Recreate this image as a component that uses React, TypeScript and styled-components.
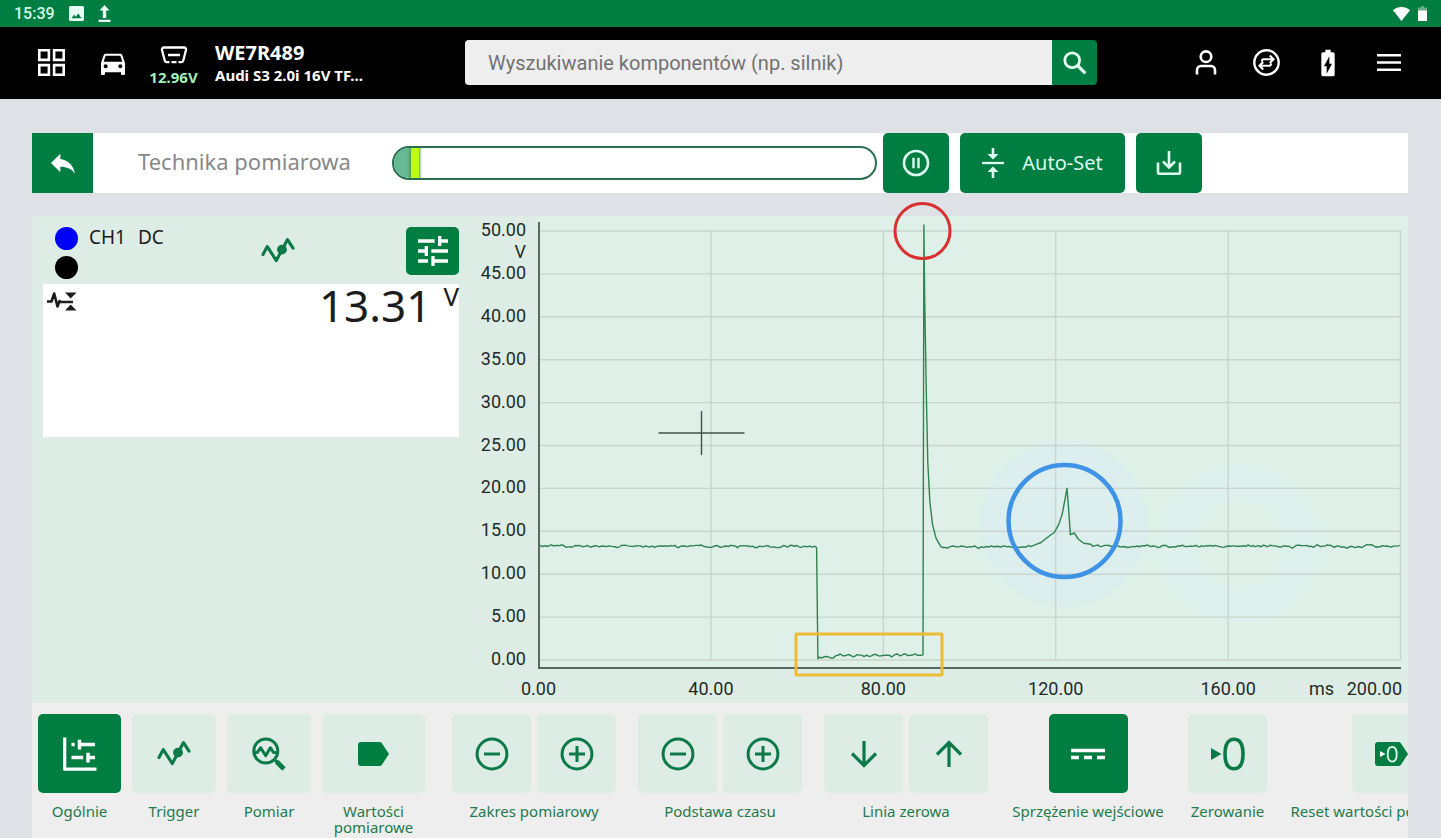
import React from 'react';
import styled, { createGlobalStyle, css } from 'styled-components';
import { MdBatteryChargingFull, MdDirectionsCar, MdReply, MdTune } from 'react-icons/md';

const colors = {
  green: '#007d40',
  iconGreen: '#0b7a48',
  mint: '#ddede5',
  page: '#dee1e6',
  grey: '#eeeeee',
};

const GlobalStyle = createGlobalStyle`
  *, *::before, *::after { box-sizing: border-box; }
  body {
    margin: 0;
    background: ${colors.page};
    font-family: 'Noto Sans', 'Open Sans', sans-serif;
    color: #1c1c1c;
    overflow-x: hidden;
  }
  button, input { font-family: inherit; }
  svg { display: block; }
`;

const Page = styled.div`
  display: flex;
  flex-direction: column;
  min-height: 100vh;
`;

const StatusBar = styled.div`
  display: flex;
  align-items: center;
  gap: 14px;
  height: 27px;
  padding: 0 14px;
  background: ${colors.green};
  color: #d6fbe8;
  font: 500 16px/27px Roboto, sans-serif;
`;

const StatusEnd = styled.div`
  display: flex;
  align-items: center;
  gap: 8px;
  margin-left: auto;
`;

const Header = styled.header`
  display: flex;
  align-items: center;
  height: 72px;
  padding: 0 22px 1px 21px;
  background: #000;
  color: #fff;
`;

const HeaderButton = styled.button`
  display: flex;
  flex-direction: column;
  align-items: center;
  justify-content: center;
  flex: 0 0 61px;
  height: 71px;
  padding: 0;
  border: 0;
  background: none;
  color: #fff;
`;

const BatteryButton = styled(HeaderButton)`
  gap: 3px;
  padding-top: 8px;
`;

const Voltage = styled.span`
  color: #a0f0b8;
  font-size: 15px;
  font-weight: 700;
  line-height: 20px;
`;

const Vehicle = styled.div`
  flex: 0 0 261px;
  padding-left: 11px;
  font-weight: 700;
`;

const Plate = styled.div`
  font-size: 20px;
  line-height: 24px;
`;

const Model = styled.div`
  font-size: 15px;
  line-height: 20px;
`;

const Search = styled.form`
  display: flex;
  flex: 1;
  min-width: 0;
  height: 45px;
  margin-right: 78px;
  border-radius: 4px;
  overflow: hidden;
`;

const SearchInput = styled.input`
  flex: 1;
  min-width: 0;
  padding: 0 23px;
  border: 0;
  background: ${colors.grey};
  font: 400 20px/24px Roboto, sans-serif;
  color: #333;
  outline: 0;
  &::placeholder { color: #727272; opacity: 1; }
`;

const SearchButton = styled.button`
  display: flex;
  align-items: center;
  justify-content: center;
  width: 45px;
  padding: 0;
  border: 0;
  background: ${colors.green};
  color: #e2fff0;
`;

const Main = styled.main`
  display: flex;
  flex: 1;
  flex-direction: column;
  padding: 34px 33px 0 32px;
`;

const Toolbar = styled.div`
  display: flex;
  align-items: center;
  height: 60px;
  margin-bottom: 23px;
  padding-right: 206px;
  background: #fff;
`;

const BackButton = styled.button`
  display: flex;
  align-items: center;
  justify-content: center;
  flex: 0 0 61px;
  height: 60px;
  padding: 0;
  border: 0;
  background: ${colors.green};
  color: #fff;
`;

const Title = styled.h1`
  flex: 0 0 299px;
  margin: 0;
  padding: 0 0 4px 45px;
  color: #888;
  font-size: 22px;
  font-weight: 400;
  line-height: 30px;
`;

const LevelTrack = styled.div`
  display: flex;
  flex: 1;
  min-width: 60px;
  height: 34px;
  margin-right: 6px;
  border: 2px solid #28704f;
  border-radius: 17px;
  background: #fff;
  overflow: hidden;
`;

const LevelFill = styled.div`
  width: 17px;
  background: #66b994;
`;

const LevelMarker = styled.div`
  width: 8px;
  background: #bcff14;
  box-shadow: 0 0 3px 1px #3d9a2c;
`;

const ActionButton = styled.button<{ $wide?: boolean }>`
  display: flex;
  align-items: center;
  justify-content: center;
  gap: 18px;
  flex: 0 0 ${(p) => (p.$wide ? 165 : 66)}px;
  height: 60px;
  padding: 0 0 1px;
  border: 0;
  border-radius: 5px;
  background: ${colors.green};
  color: #dcfff0;
  font-size: 20px;
  line-height: 28px;
  & + & { margin-left: 11px; }
`;

const Scope = styled.section`
  display: flex;
  background: ${colors.mint};
`;

const Channel = styled.div`
  flex: 0 0 438px;
  padding: 11px 11px 0;
`;

const ChannelHead = styled.div`
  display: flex;
  width: 416px;
  height: 57px;
  padding-left: 12px;
`;

const Dots = styled.div`
  display: flex;
  flex-direction: column;
  gap: 6px;
  width: 34px;
`;

const Dot = styled.span<{ $color: string }>`
  width: 23px;
  height: 23px;
  border-radius: 50%;
  background: ${(p) => p.$color};
`;

const ChannelName = styled.div`
  display: flex;
  gap: 12px;
  width: 172px;
  font-size: 19px;
  line-height: 20px;
`;

const ChannelTrigger = styled.div`
  padding-top: 10px;
  color: ${colors.iconGreen};
`;

const SettingsButton = styled.button`
  display: flex;
  align-items: center;
  justify-content: center;
  width: 53px;
  height: 48px;
  margin: 0 0 0 auto;
  padding: 0;
  border: 0;
  border-radius: 5px;
  background: ${colors.green};
  color: #fff;
`;

const Readout = styled.div`
  display: flex;
  align-items: flex-start;
  width: 416px;
  height: 153px;
  padding-left: 4px;
  background: #fff;
`;

const ReadoutIcon = styled.div`
  padding-top: 8px;
`;

const Value = styled.output`
  margin-left: auto;
  font-size: 44px;
  line-height: 42px;
`;

const Unit = styled.span`
  margin-left: 12px;
  font-size: 26px;
  line-height: 25px;
`;

const ChartBox = styled.div`
  flex: 1;
  min-width: 0;
`;

const ChartSvg = styled.svg`
  width: 100%;
  height: auto;
  overflow: visible;
  font: 400 18px Roboto, sans-serif;
`;

const Dock = styled.nav`
  display: flex;
  flex: 1;
  align-items: flex-start;
  padding: 11px 0 2px 6px;
  background: ${colors.grey};
  overflow: hidden;
`;

const Views = styled.div`
  display: flex;
  gap: 11px;
  margin-right: 27px;
`;

const Controls = styled.div`
  display: flex;
  gap: 22px;
`;

const Group = styled.div<{ $width: number }>`
  display: flex;
  flex-direction: column;
  align-items: center;
  flex: 0 0 ${(p) => p.$width}px;
`;

const Tiles = styled.div`
  display: flex;
  gap: 6px;
`;

const Tile = styled.button<{ $active?: boolean; $width?: number }>`
  display: flex;
  align-items: center;
  justify-content: center;
  width: ${(p) => p.$width ?? 79}px;
  height: 79px;
  padding: 0;
  border: 0;
  border-radius: 5px;
  background: ${colors.mint};
  color: ${colors.iconGreen};
  ${(p) =>
    p.$active &&
    css`
      background: ${colors.green};
      color: #fff;
    `}
`;

const Caption = styled.span<{ $wrap?: boolean }>`
  margin-top: 10px;
  color: #1f7a4c;
  font-size: 15px;
  line-height: 16px;
  text-align: center;
  white-space: ${(p) => (p.$wrap ? 'normal' : 'nowrap')};
`;

type IconProps = { w: number; h: number; children: React.ReactNode };

const Icon = ({ w, h, children }: IconProps) => (
  <svg
    width={w}
    height={h}
    viewBox={`0 0 ${w} ${h}`}
    fill="none"
    stroke="currentColor"
    strokeWidth="2.6"
    aria-hidden="true"
  >
    {children}
  </svg>
);

const ImageIcon = () => (
  <Icon w={15} h={15}>
    <path
      d="M1.5 0h12A1.5 1.5 0 0 1 15 1.5v12a1.5 1.5 0 0 1-1.5 1.5h-12A1.5 1.5 0 0 1 0 13.5v-12A1.5 1.5 0 0 1 1.5 0zM2.5 12.2h10L9.3 7.6l-2.6 3.2-1.7-2z"
      fill="#e6fff2"
      fillRule="evenodd"
      stroke="none"
    />
  </Icon>
);

const UploadIcon = () => (
  <Icon w={13} h={17}>
    <path d="M6.5 0 11.5 5.5H8.2V13H4.8V5.5H1.5zM.5 14.8h12V17H.5z" fill="#e6fff2" stroke="none" />
  </Icon>
);

const WifiIcon = () => (
  <Icon w={17} h={14}>
    <path d="M0 3.2C5-1 12-1 17 3.2L8.5 14z" fill="#fff" stroke="none" />
  </Icon>
);

const BatteryIcon = () => (
  <Icon w={9} h={15}>
    <path d="M3 0h3v1.5H9V5H0V1.5h3z" fill="#5fae85" stroke="none" />
    <path d="M0 4.5h9V15H0z" fill="#fff" stroke="none" />
  </Icon>
);

const GridIcon = () => (
  <Icon w={27} h={27}>
    <path d="M1.3 1.3h9.6v9.6H1.3zM16.1 1.3h9.6v9.6h-9.6zM1.3 16.1h9.6v9.6H1.3zM16.1 16.1h9.6v9.6h-9.6z" />
  </Icon>
);

const PlugIcon = () => (
  <Icon w={28} h={18}>
    <path
      d="M9.5 16.2H6.8a2 2 0 0 1-2-1.5L2 4a2 2 0 0 1 2-2.5h20A2 2 0 0 1 26 4l-2.8 10.7a2 2 0 0 1-2 1.5h-2.7M11.5 16.2h5M8 9h12"
      strokeWidth="2.3"
    />
  </Icon>
);

const SearchIcon = () => (
  <Icon w={24} h={24}>
    <circle cx="9.2" cy="9.2" r="7.4" strokeWidth="2.8" />
    <path d="M14.4 14.4l8 8" strokeWidth="3.2" />
  </Icon>
);

const PersonIcon = () => (
  <Icon w={22} h={25}>
    <circle cx="11" cy="6.7" r="5.3" />
    <path d="M2 24.5V20a4 4 0 0 1 4-4h10a4 4 0 0 1 4 4v4.5" />
  </Icon>
);

const SwapIcon = () => (
  <Icon w={27} h={27}>
    <circle cx="13.5" cy="13.5" r="12.2" strokeWidth="2.4" />
    <path
      d="M9 12.5v-.5a1.8 1.8 0 0 1 1.8-1.8H20M16.8 6.5l3.7 3.7-3.7 3.7M18 14.5v.5a1.8 1.8 0 0 1-1.8 1.8H7M10.2 13.1l-3.7 3.7 3.7 3.7"
      strokeWidth="2.1"
    />
  </Icon>
);

const MenuIcon = () => (
  <Icon w={24} h={17}>
    <path d="M0 1.3h24M0 8.5h24M0 15.7h24" strokeWidth="2.5" />
  </Icon>
);

const PauseIcon = () => (
  <Icon w={28} h={28}>
    <circle cx="14" cy="14" r="12" />
    <path d="M11.5 8.8v10.4M16.5 8.8v10.4" strokeWidth="2.4" />
  </Icon>
);

const AutoSetIcon = () => (
  <Icon w={22} h={30}>
    <path d="M0 15h22" strokeWidth="2.3" />
    <path
      d="M9.7 0h2.6v6H16.5L11 11.5 5.5 6h4.2zM9.7 30h2.6v-6H16.5L11 18.5 5.5 24h4.2z"
      fill="currentColor"
      stroke="none"
    />
  </Icon>
);

const DownloadIcon = () => (
  <Icon w={26} h={26}>
    <path d="M13 1v16M7 11.5l6 6 6-6M2 12.5v9.8a1.5 1.5 0 0 0 1.5 1.5h19a1.5 1.5 0 0 0 1.5-1.5v-9.8" />
  </Icon>
);

const TriggerIcon = () => (
  <Icon w={34} h={27}>
    <path d="M2 17.5 6.3 9.6l9 14L26.5 2.6l5.5 8.5" strokeWidth="3.1" strokeLinejoin="round" strokeLinecap="round" />
    <circle cx="21" cy="12.6" r="4.9" fill="currentColor" stroke="none" />
  </Icon>
);

const GeneralIcon = () => (
  <Icon w={34} h={34}>
    <path d="M1.7.5v31.7H33.5" strokeWidth="3.2" strokeLinejoin="round" />
    <path d="M8.5 7.5h3.2M17 7.5h15M16.5 2.7v9.8M8.5 20.5h11.7M25 20.5h7M25 15.7v9.8" strokeWidth="3.5" />
  </Icon>
);

const MeasureIcon = () => (
  <Icon w={34} h={34}>
    <circle cx="13.8" cy="14" r="12" strokeWidth="3" />
    <path d="M22 22l3 3" strokeWidth="3" />
    <path d="M24.5 24.5l7.5 7.5" strokeWidth="4.8" />
    <path d="M3 15.5h2.2l3.5-4.8 5 8 4.6-8 3.2 4.8h2.5" strokeWidth="3" strokeLinejoin="round" />
  </Icon>
);

const TagIcon = () => (
  <Icon w={31} h={24}>
    <path
      d="M3 0h18.5a3 3 0 0 1 2.4 1.2L31 12l-7.1 10.8a3 3 0 0 1-2.4 1.2H3a3 3 0 0 1-3-3V3a3 3 0 0 1 3-3z"
      fill="#007d40"
      stroke="none"
    />
  </Icon>
);

const MinusIcon = () => (
  <Icon w={34} h={34}>
    <circle cx="17" cy="17" r="14.9" strokeWidth="3" />
    <path d="M9 17h16" strokeWidth="3" />
  </Icon>
);

const PlusIcon = () => (
  <Icon w={34} h={34}>
    <circle cx="17" cy="17" r="14.9" strokeWidth="3" />
    <path d="M9 17h16M17 9v16" strokeWidth="3" />
  </Icon>
);

const ArrowIcon = ({ up }: { up?: boolean }) => (
  <Icon w={28} h={28}>
    <path d={up ? 'M14 27V3M2 14.5l12-12 12 12' : 'M14 1v24M2 13.5l12 12 12-12'} strokeWidth="3.2" />
  </Icon>
);

const DcIcon = () => (
  <Icon w={34} h={12}>
    <path d="M0 2.5h34M0 9.5h8M13 9.5h8M26 9.5h8" strokeWidth="3.6" />
  </Icon>
);

const ZeroIcon = () => (
  <Icon w={36} h={34}>
    <path d="M1 11l10.5 6L1 23z" fill="currentColor" stroke="none" />
    <path
      d="M24 2.2c6 0 9 5.4 9 14.8s-3 14.8-9 14.8-9-5.4-9-14.8 3-14.8 9-14.8z"
      strokeWidth="3.6"
    />
  </Icon>
);

const ZeroTagIcon = () => (
  <Icon w={33} h={24}>
    <path
      d="M3 0h20.5a3 3 0 0 1 2.4 1.2L33 12l-7.1 10.8a3 3 0 0 1-2.4 1.2H3a3 3 0 0 1-3-3V3a3 3 0 0 1 3-3z"
      fill="#007d40"
      stroke="none"
    />
    <path d="M5 9l5.5 3L5 15z" fill="#fff" stroke="none" />
    <path
      d="M17.2 4.8c3 0 4.5 2.7 4.5 7.4s-1.5 7.4-4.5 7.4-4.5-2.7-4.5-7.4 1.5-7.4 4.5-7.4z"
      stroke="#e2fff0"
      strokeWidth="1.8"
    />
  </Icon>
);

const SignalIcon = () => (
  <Icon w={30} h={19}>
    <path d="M0 9.5h4.5l2.7-8 3.3 13 2-5.5 1.3 1H26" strokeWidth="2.6" strokeLinejoin="round" />
    <path d="M18 .5h11.5L23.7 6.5zM18 18.5h11.5L23.7 12.5z" fill="currentColor" stroke="none" />
  </Icon>
);

const plot = { left: 69, right: 931, top: 15, bottom: 444, maxTime: 200, maxVolt: 50 };
const px = (ms: number) => plot.left + (ms / plot.maxTime) * (plot.right - plot.left);
const py = (v: number) => plot.bottom - (v / plot.maxVolt) * (plot.bottom - plot.top);

const random = (i: number) => {
  const s = Math.sin(i * 127.1 + 11.7) * 43758.5453;
  return (s - Math.floor(s)) * 2 - 1;
};
const noise = (i: number) => (random(i) + random(i + 1)) * 0.6 + random(Math.floor(i / 5)) * 0.4;

const flat = (from: number, to: number, volt: number, amp: number): [number, number][] => {
  const points: [number, number][] = [];
  for (let t = from, i = Math.round(from * 3); t <= to; t += 0.4, i += 1) points.push([t, volt + noise(i) * amp]);
  return points;
};

const samples: [number, number][] = [
  ...flat(0, 64.2, 13.25, 0.15),
  [64.4, 13.1],
  [64.6, 5],
  [64.7, 0.15],
  ...flat(65, 68.5, 0.32, 0.12),
  ...flat(69, 88.8, 0.55, 0.16),
  [89.1, 0.6],
  [89.3, 50.7],
  [89.5, 42],
  [89.9, 30],
  [90.2, 23],
  [90.7, 18.4],
  [91.3, 15.8],
  [92.1, 14.2],
  [92.8, 13.6],
  ...flat(93.3, 114.5, 13.2, 0.15),
  [115.5, 13.5],
  [116.5, 13.7],
  [118, 14.3],
  [119.6, 14.9],
  [120.6, 15.8],
  [121.4, 17],
  [122, 18.6],
  [122.5, 20],
  [122.9, 17.5],
  [123.3, 14.6],
  [124.2, 14.8],
  [125.1, 14.1],
  [126.4, 13.6],
  [128, 13.5],
  ...flat(128.5, 200, 13.25, 0.15),
];

const trace = samples.map(([t, v]) => `${px(t).toFixed(1)},${py(v).toFixed(1)}`).join(' ');
const volts = [50, 45, 40, 35, 30, 25, 20, 15, 10, 5, 0];
const times = [0, 40, 80, 120, 160];

const Chart = () => (
  <ChartSvg viewBox="0 0 938 487" role="img" aria-label="CH1 V / ms">
    <rect x="69" y="0" width="869" height="452" fill="#dff0e8" />
    <circle cx="594" cy="308" r="83" fill="#dceeed" />
    <circle cx="769" cy="328" r="62" fill="none" stroke="#def0eb" strokeWidth="34" />
    <g stroke="#c8d4cd" strokeWidth="1.4">
      {volts.map((v) => (
        <line key={v} x1={plot.left} x2={plot.right} y1={py(v)} y2={py(v)} />
      ))}
      {[...times.slice(1), 200].map((t) => (
        <line key={t} x1={px(t) - 0.5} x2={px(t) - 0.5} y1={plot.top} y2={plot.bottom} />
      ))}
    </g>
    <path d="M69 6v446" stroke="#5b6862" strokeWidth="2" />
    <path d="M68 452h863" stroke="#5b6862" strokeWidth="2" />
    <g fill="#232b28">
      <g textAnchor="end">
        {volts.map((v) => (
          <text key={v} x="56" y={py(v) + 5}>
            {v.toFixed(2)}
          </text>
        ))}
        <text x="56" y="42">V</text>
        <text x="932" y="479">200.00</text>
        <text x="864" y="479">ms</text>
      </g>
      <g textAnchor="middle">
        {times.map((t) => (
          <text key={t} x={px(t) - 0.5} y="479">
            {t.toFixed(2)}
          </text>
        ))}
      </g>
    </g>
    <path d="M188.5 217h86M231.5 195v44" stroke="#46504c" strokeWidth="1.4" />
    <polyline points={trace} fill="none" stroke="#2f8350" strokeWidth="1.4" strokeLinejoin="round" />
    <circle cx="452.5" cy="15" r="27.5" fill="none" stroke="#d9302f" strokeWidth="3" />
    <circle cx="594.5" cy="305" r="56" fill="none" stroke="#3f93e6" strokeWidth="4.5" />
    <rect x="326" y="418" width="146" height="41" rx="1" fill="none" stroke="#edbc34" strokeWidth="3" />
  </ChartSvg>
);

const views = [
  { label: 'Ogólnie', icon: <GeneralIcon />, width: 83, active: true },
  { label: 'Trigger', icon: <TriggerIcon />, width: 84 },
  { label: 'Pomiar', icon: <MeasureIcon />, width: 84 },
  { label: 'Wartości pomiarowe', icon: <TagIcon />, width: 103, wrap: true },
];

const controls = [
  { label: 'Zakres pomiarowy', width: 164, tiles: [{ name: 'Zakres −', icon: <MinusIcon /> }, { name: 'Zakres +', icon: <PlusIcon /> }] },
  { label: 'Podstawa czasu', width: 164, tiles: [{ name: 'Czas −', icon: <MinusIcon /> }, { name: 'Czas +', icon: <PlusIcon /> }] },
  { label: 'Linia zerowa', width: 164, tiles: [{ name: 'W dół', icon: <ArrowIcon /> }, { name: 'W górę', icon: <ArrowIcon up /> }] },
  { label: 'Sprzężenie wejściowe', width: 156, tiles: [{ name: 'Sprzężenie wejściowe', icon: <DcIcon />, active: true }] },
  { label: 'Zerowanie', width: 79, tiles: [{ name: 'Zerowanie', icon: <ZeroIcon /> }] },
  { label: 'Reset wartości pomiarowych', width: 204, tiles: [{ name: 'Reset', icon: <ZeroTagIcon /> }] },
];

export default function App() {
  return (
    <Page>
      <GlobalStyle />
      <StatusBar>
        <span>15:39</span>
        <ImageIcon />
        <UploadIcon />
        <StatusEnd>
          <WifiIcon />
          <BatteryIcon />
        </StatusEnd>
      </StatusBar>
      <Header>
        <HeaderButton aria-label="Menu główne"><GridIcon /></HeaderButton>
        <HeaderButton aria-label="Pojazd"><MdDirectionsCar size={32} /></HeaderButton>
        <BatteryButton>
          <PlugIcon />
          <Voltage>12.96V</Voltage>
        </BatteryButton>
        <Vehicle>
          <Plate>WE7R489</Plate>
          <Model>Audi S3 2.0i 16V TF...</Model>
        </Vehicle>
        <Search onSubmit={(e) => e.preventDefault()}>
          <SearchInput
            type="text"
            aria-label="Wyszukiwanie komponentów"
            placeholder="Wyszukiwanie komponentów (np. silnik)"
          />
          <SearchButton aria-label="Szukaj"><SearchIcon /></SearchButton>
        </Search>
        <HeaderButton aria-label="Użytkownik"><PersonIcon /></HeaderButton>
        <HeaderButton aria-label="Połączenie"><SwapIcon /></HeaderButton>
        <HeaderButton aria-label="Akumulator"><MdBatteryChargingFull size={32} /></HeaderButton>
        <HeaderButton aria-label="Menu"><MenuIcon /></HeaderButton>
      </Header>
      <Main>
        <Toolbar>
          <BackButton aria-label="Wstecz"><MdReply size={32} /></BackButton>
          <Title>Technika pomiarowa</Title>
          <LevelTrack>
            <LevelFill />
            <LevelMarker />
          </LevelTrack>
          <ActionButton aria-label="Pauza"><PauseIcon /></ActionButton>
          <ActionButton $wide>
            <AutoSetIcon />
            Auto-Set
          </ActionButton>
          <ActionButton aria-label="Zapisz"><DownloadIcon /></ActionButton>
        </Toolbar>
        <Scope>
          <Channel>
            <ChannelHead>
              <Dots>
                <Dot $color="#0000fa" />
                <Dot $color="#000" />
              </Dots>
              <ChannelName>
                <span>CH1</span>
                <span>DC</span>
              </ChannelName>
              <ChannelTrigger><TriggerIcon /></ChannelTrigger>
              <SettingsButton aria-label="Ustawienia kanału"><MdTune size={40} /></SettingsButton>
            </ChannelHead>
            <Readout>
              <ReadoutIcon><SignalIcon /></ReadoutIcon>
              <Value>13.31</Value>
              <Unit>V</Unit>
            </Readout>
          </Channel>
          <ChartBox>
            <Chart />
          </ChartBox>
        </Scope>
        <Dock>
          <Views>
            {views.map((v) => (
              <Group key={v.label} $width={v.width}>
                <Tile $active={v.active} $width={v.width} aria-label={v.label}>{v.icon}</Tile>
                <Caption $wrap={v.wrap}>{v.label}</Caption>
              </Group>
            ))}
          </Views>
          <Controls>
            {controls.map((c) => (
              <Group key={c.label} $width={c.width}>
                <Tiles>
                  {c.tiles.map((t) => (
                    <Tile key={t.name} $active={'active' in t} aria-label={t.name}>{t.icon}</Tile>
                  ))}
                </Tiles>
                <Caption>{c.label}</Caption>
              </Group>
            ))}
          </Controls>
        </Dock>
      </Main>
    </Page>
  );
}
